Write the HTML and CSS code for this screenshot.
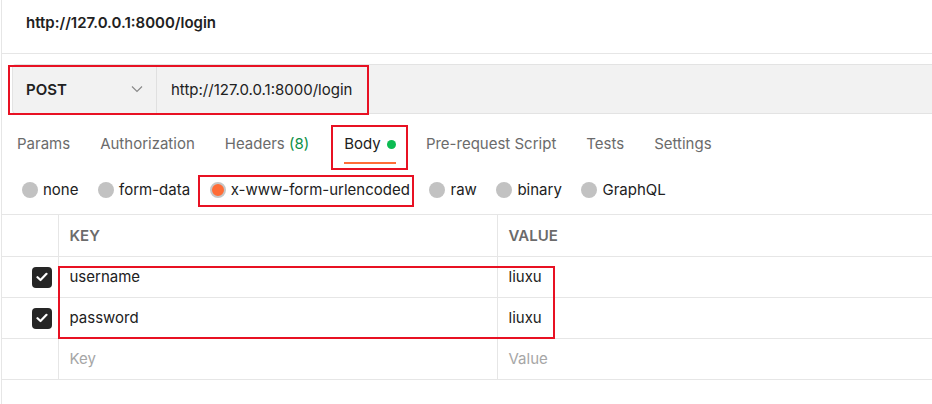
FILE: index.html
```html
<!DOCTYPE html>
<html lang="en">
<head>
<meta charset="utf-8">
<title>Postman request</title>
<link rel="stylesheet" href="styles.css">
</head>
<body>
<div class="app">
  <header class="title-bar">
    <h1 class="title">http://127.0.0.1:8000/login</h1>
  </header>

  <div class="request-row">
    <div class="request-bar">
      <div class="method">
        <span class="method-name">POST</span>
        <svg class="chevron" width="12" height="8" viewBox="0 0 12 8"><path d="M1 1.5 L6 6.5 L11 1.5" fill="none" stroke="#8a8a8a" stroke-width="1.2"/></svg>
      </div>
      <div class="url">http://127.0.0.1:8000/login</div>
    </div>
    <div class="annot annot-request"></div>
  </div>

  <nav class="tabs">
    <span class="tab">Params</span>
    <span class="tab">Authorization</span>
    <span class="tab">Headers <span class="count">(8)</span></span>
    <span class="tab tab-active">Body <span class="dot"></span><span class="annot annot-body"></span></span>
    <span class="tab">Pre-request Script</span>
    <span class="tab">Tests</span>
    <span class="tab">Settings</span>
  </nav>

  <div class="body-types">
    <span class="radio-item"><span class="radio"></span>none</span>
    <span class="radio-item"><span class="radio"></span>form-data</span>
    <span class="radio-item"><span class="radio radio-on"></span>x-www-form-urlencoded<span class="annot annot-type"></span></span>
    <span class="radio-item"><span class="radio"></span>raw</span>
    <span class="radio-item"><span class="radio"></span>binary</span>
    <span class="radio-item"><span class="radio"></span>GraphQL</span>
  </div>

  <div class="table-wrap">
    <table class="kv">
      <thead>
        <tr><th class="c-check"></th><th class="c-key">KEY</th><th class="c-val">VALUE</th></tr>
      </thead>
      <tbody>
        <tr>
          <td class="c-check"><span class="checkbox"><svg width="12" height="10" viewBox="0 0 12 10"><path d="M1.5 5.2 L4.5 8 L10.5 1.8" fill="none" stroke="#fff" stroke-width="2.2" stroke-linecap="round" stroke-linejoin="round"/></svg></span></td>
          <td class="c-key">username</td>
          <td class="c-val">liuxu</td>
        </tr>
        <tr>
          <td class="c-check"><span class="checkbox"><svg width="12" height="10" viewBox="0 0 12 10"><path d="M1.5 5.2 L4.5 8 L10.5 1.8" fill="none" stroke="#fff" stroke-width="2.2" stroke-linecap="round" stroke-linejoin="round"/></svg></span></td>
          <td class="c-key">password</td>
          <td class="c-val">liuxu</td>
        </tr>
        <tr class="placeholder">
          <td class="c-check"></td>
          <td class="c-key">Key</td>
          <td class="c-val">Value</td>
        </tr>
      </tbody>
    </table>
    <div class="annot annot-rows"></div>
  </div>
</div>
</body>
</html>
```

FILE: styles.css
```css
* { box-sizing: border-box; }

html, body {
  margin: 0;
  padding: 0;
  background: #fff;
  overflow: hidden;
}

body {
  font-family: Inter, "Noto Sans", sans-serif;
  font-size: 15px;
  color: #212121;
  width: 932px;
  height: 404px;
}

.app {
  margin-left: 1px;
  border-left: 1px solid #e6e6e6;
  height: 404px;
}

.annot {
  position: absolute;
  border: 2px solid #e81123;
  pointer-events: none;
}

/* title */
.title-bar {
  height: 54px;
  border-bottom: 1px solid #e6e6e6;
  padding: 13px 0 0 24px;
}
.title {
  margin: 0;
  font-size: 15px;
  line-height: 20px;
  font-weight: 600;
  color: #212121;
}

/* request bar */
.request-row {
  position: relative;
  margin-top: 10px;
  padding-left: 10px;
}
.request-bar {
  display: flex;
  height: 50px;
  background: #f2f2f2;
  border: 1px solid #e3e3e3;
  border-right: none;
  border-radius: 4px 0 0 4px;
}
.method {
  width: 144px;
  display: flex;
  align-items: center;
  justify-content: space-between;
  padding: 0 13px 0 13px;
  border-right: 1px solid #e0e0e0;
}
.method-name {
  font-weight: 600;
  font-size: 15px;
}
.url {
  display: flex;
  align-items: center;
  padding-left: 14px;
  font-size: 15px;
  color: #212121;
}
.annot-request {
  left: 6px;
  top: 1px;
  width: 361px;
  height: 50px;
}

/* tabs */
.tabs {
  display: flex;
  gap: 30px;
  padding-left: 15px;
  height: 51px;
}
.tab {
  position: relative;
  display: flex;
  align-items: center;
  padding-top: 20px;
  padding-bottom: 8px;
  line-height: 20px;
  height: 50px;
  color: #6b6b6b;
  border-bottom: 2px solid transparent;
  white-space: pre;
}
.count { color: #0a8f45; }
.tab-active {
  color: #212121;
  border-bottom-color: #ff6c37;
  margin-left: 5px;
}
.dot {
  display: inline-block;
  width: 9px;
  height: 9px;
  border-radius: 50%;
  background: #0cbb52;
  margin-left: 2px;
}
.annot-body {
  left: -13px;
  right: -12px;
  top: 11px;
  bottom: -8px;
}

/* body types */
.body-types {
  display: flex;
  align-items: center;
  gap: 19.6px;
  height: 49px;
  padding-left: 20px;
}
.radio-item {
  position: relative;
  display: flex;
  align-items: center;
  gap: 5px;
  line-height: 20px;
  height: 20px;
  color: #212121;
}
.radio {
  width: 16px;
  height: 16px;
  border-radius: 50%;
  background: #c2c2c2;
}
.radio-on {
  background: #ff6c37;
  border: 2px solid #c6c6c6;
}
.annot-type {
  left: -12px;
  right: -4px;
  top: -5px;
  bottom: -7px;
}

/* table */
.table-wrap {
  position: relative;
}
.kv {
  width: 100%;
  border-collapse: collapse;
  table-layout: fixed;
}
.kv th, .kv td {
  border-top: 1px solid #e6e6e6;
  border-bottom: 1px solid #e6e6e6;
  text-align: left;
  padding: 0 0 0 11px;
  line-height: 20px;
}
.kv th {
  height: 42px;
  font-weight: 600;
  color: #6b6b6b;
  font-size: 15px;
}
.kv td {
  height: 41px;
}
.kv .c-check {
  width: 56px;
  padding: 0 6px 0 0;
  text-align: right;
  border-right: 1px solid #e6e6e6;
}
.kv .c-key {
  width: 439px;
  border-right: 1px solid #e6e6e6;
}
.checkbox {
  display: inline-flex;
  align-items: center;
  justify-content: center;
  width: 20px;
  height: 21px;
  border-radius: 4px;
  background: #262626;
  vertical-align: middle;
}
.placeholder td { color: #a6a6a6; }
.annot-rows {
  left: 56px;
  top: 52px;
  width: 497px;
  height: 73px;
}
```
